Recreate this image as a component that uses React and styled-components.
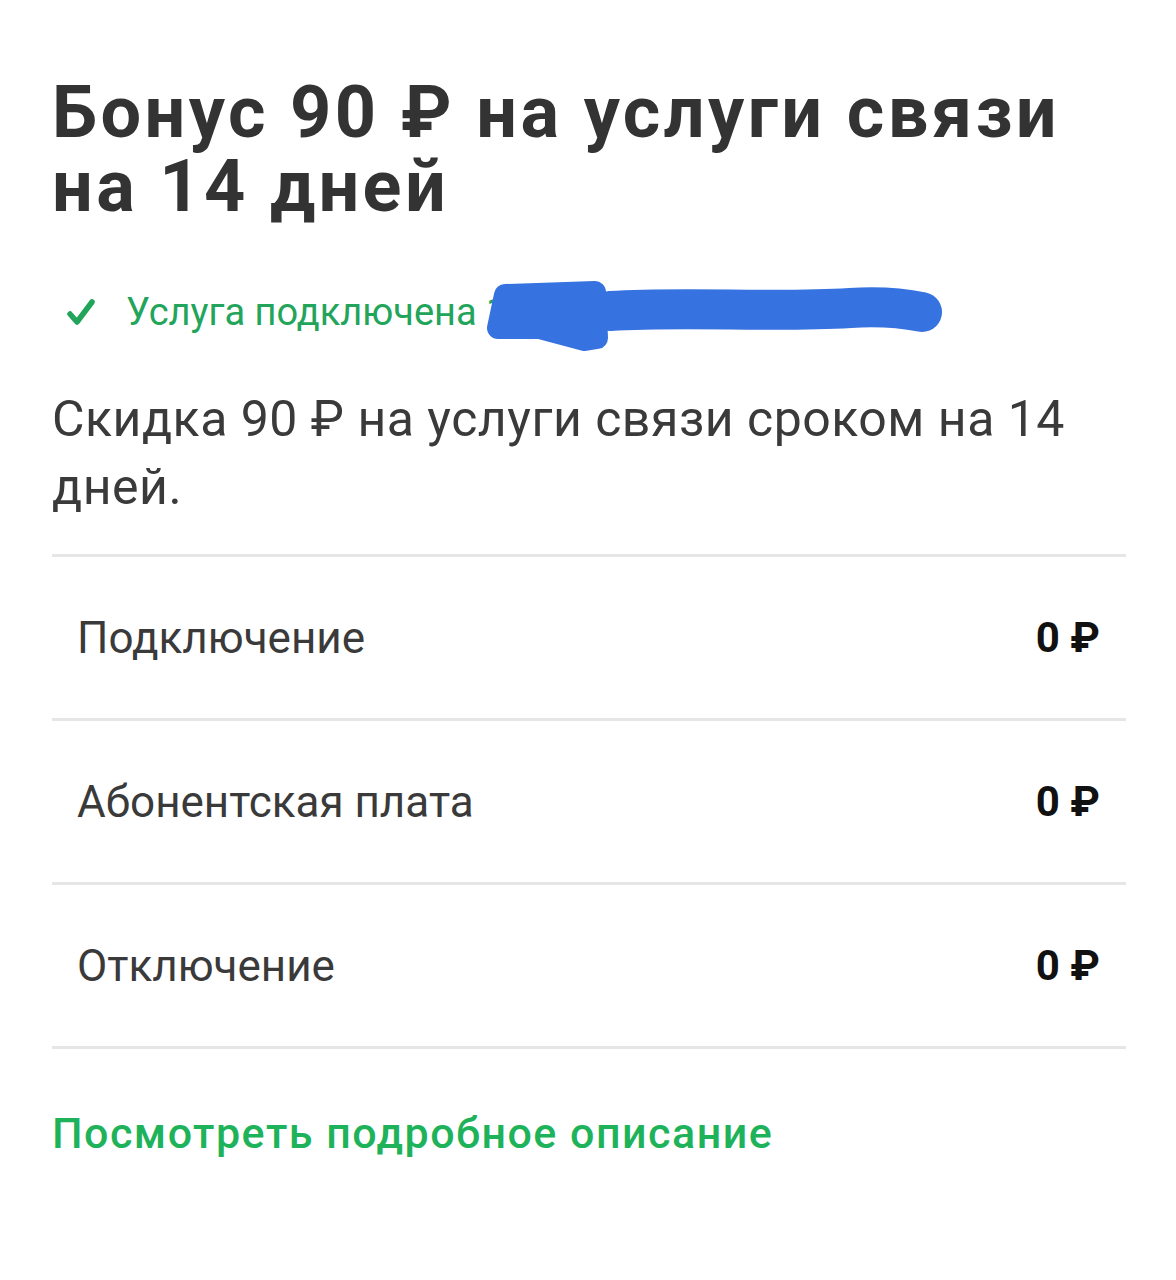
import React from "react";
import styled, { createGlobalStyle } from "styled-components";

const GlobalStyle = createGlobalStyle`
  html, body {
    margin: 0;
    padding: 0;
    background: #ffffff;
  }
  body {
    font-family: Roboto, "Noto Sans", "Liberation Sans", sans-serif;
    -webkit-font-smoothing: antialiased;
  }
`;

const Page = styled.div`
  width: 1176px;
  min-height: 1280px;
  box-sizing: border-box;
  padding: 76px 50px 0 52px;
  background: #fff;
`;

const Title = styled.h1`
  margin: 0;
  font-size: 72px;
  line-height: 74px;
  font-weight: 700;
  color: #333333;
  letter-spacing: 3.4px;
`;

const Status = styled.div`
  position: relative;
  display: flex;
  align-items: center;
  gap: 30px;
  margin-top: 63px;
  padding-left: 14px;
  height: 50px;
  color: #22a55a;
  font-size: 38px;
`;

const CheckIcon = styled.svg`
  width: 30px;
  height: 28px;
  flex: none;
`;

const Scribble = styled.svg`
  position: absolute;
  left: 418px;
  top: -17px;
  width: 490px;
  height: 90px;
`;

const Description = styled.p`
  margin: 48px 0 0;
  font-size: 50px;
  line-height: 68px;
  color: #3a3a3a;
  font-weight: 400;
  letter-spacing: 0.5px;
`;

const Table = styled.div`
  margin-top: 33px;
  border-top: 3px solid #e6e6e6;
`;

const Row = styled.div`
  display: flex;
  align-items: center;
  justify-content: space-between;
  height: 161px;
  padding: 0 26px 0 25px;
  border-bottom: 3px solid #e6e6e6;
`;

const Label = styled.span`
  font-size: 44px;
  color: #3a3a3a;
`;

const Price = styled.span`
  font-size: 42px;
  font-weight: 700;
  color: #111;
`;

const MoreLink = styled.a`
  display: block;
  margin-top: 59px;
  font-size: 43px;
  font-weight: 500;
  letter-spacing: 1.5px;
  color: #1eb35a;
  text-decoration: none;
  cursor: pointer;
`;

const rows = [
  { label: "Подключение", price: "0 ₽" },
  { label: "Абонентская плата", price: "0 ₽" },
  { label: "Отключение", price: "0 ₽" },
];

const App = () => {
  return (
    <>
      <GlobalStyle />
      <Page>
        <Title>
          Бонус 90 ₽ на услуги связи
          <br />
          на 14 дней
        </Title>
        <Status>
          <CheckIcon viewBox="0 0 30 28">
            <path
              d="M4 16 L11 24 L26 4"
              fill="none"
              stroke="#22a55a"
              strokeWidth="5.5"
              strokeLinecap="round"
              strokeLinejoin="round"
            />
          </CheckIcon>
          <span>Услуга подключена 1</span>
          <Scribble viewBox="0 0 490 90">
            <path
              d="M140 41 C 220 36, 300 43, 380 38 C 410 36, 432 38, 452 42"
              fill="none"
              stroke="#3672e0"
              strokeWidth="40"
              strokeLinecap="round"
            />
            <path
              d="M35 25 L125 22 L127 68 L115 70 L70 58 L28 58 Z"
              fill="#3672e0"
              stroke="#3672e0"
              strokeWidth="22"
              strokeLinejoin="round"
            />
          </Scribble>
        </Status>
        <Description>
          Скидка 90 ₽ на услуги связи сроком на 14 дней.
        </Description>
        <Table>
          {rows.map((row) => (
            <Row key={row.label}>
              <Label>{row.label}</Label>
              <Price>{row.price}</Price>
            </Row>
          ))}
        </Table>
        <MoreLink>Посмотреть подробное описание</MoreLink>
      </Page>
    </>
  );
};

export default App;
